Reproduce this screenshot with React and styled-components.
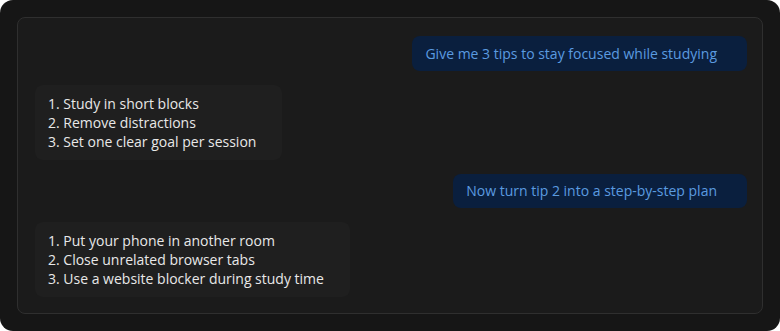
import React from 'react';
import styled, { createGlobalStyle } from 'styled-components';

const GlobalStyle = createGlobalStyle`
    html, body {
        margin: 0;
        padding: 0;
        background: #ffffff;
    }
    body {
        font-family: "Open Sans", "Noto Sans", sans-serif;
    }
`;

const Frame = styled.div`
    width: 780px;
    height: 331px;
    box-sizing: border-box;
    padding: 17px;
    background: #161616;
    border-radius: 13px;
`;

const Thread = styled.div`
    height: 100%;
    box-sizing: border-box;
    display: flex;
    flex-direction: column;
    gap: 14px;
    padding: 18px 15px 15px 17px;
    background: #1b1b1b;
    border: 1px solid #2f2f2f;
    border-radius: 8px;
`;

const Row = styled.div`
    display: flex;
    justify-content: ${(p) => (p.$mine ? 'flex-end' : 'flex-start')};
`;

const UserBubble = styled.div`
    padding: 7.5px 30px 8px 13px;
    background: #0a1f3e;
    color: #5b9be0;
    border-radius: 8px;
    font-size: 14px;
    line-height: 19px;
`;

const ReplyBubble = styled.div`
    padding: 9px 26px 9px 13px;
    background: #1f1f1f;
    color: #e8e8e8;
    border-radius: 8px;
    font-size: 14px;
    line-height: 19px;
`;

const Line = styled.div`
    white-space: nowrap;
`;

const conversation = [
    { mine: true, text: 'Give me 3 tips to stay focused while studying' },
    {
        mine: false,
        lines: ['1. Study in short blocks', '2. Remove distractions', '3. Set one clear goal per session'],
    },
    { mine: true, text: 'Now turn tip 2 into a step-by-step plan' },
    {
        mine: false,
        lines: [
            '1. Put your phone in another room',
            '2. Close unrelated browser tabs',
            '3. Use a website blocker during study time',
        ],
    },
];

export default function App() {
    return (
        <>
            <GlobalStyle />
            <Frame>
                <Thread>
                    {conversation.map((msg, i) => (
                        <Row key={i} $mine={msg.mine}>
                            {msg.mine ? (
                                <UserBubble>{msg.text}</UserBubble>
                            ) : (
                                <ReplyBubble>
                                    {msg.lines.map((l) => (
                                        <Line key={l}>{l}</Line>
                                    ))}
                                </ReplyBubble>
                            )}
                        </Row>
                    ))}
                </Thread>
            </Frame>
        </>
    );
}
